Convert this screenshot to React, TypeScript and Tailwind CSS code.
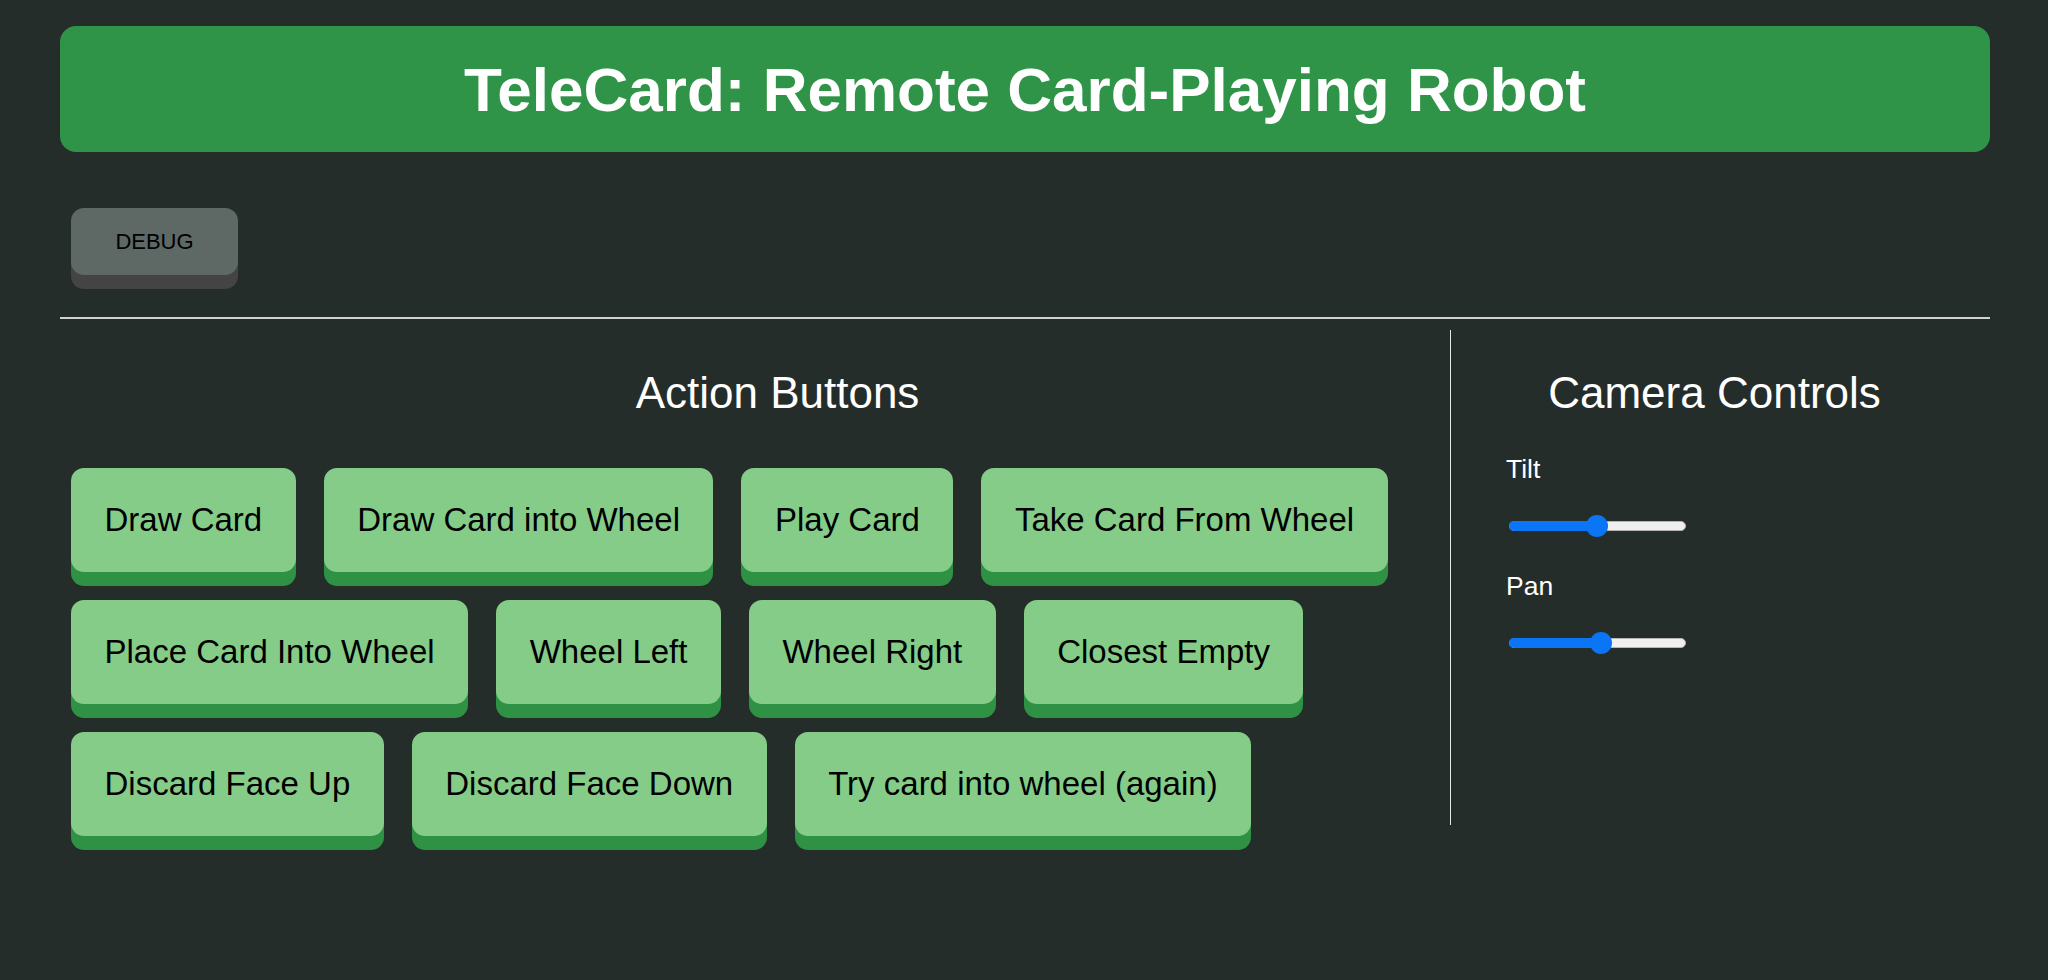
import React from "react";

const actions = [
  "Draw Card",
  "Draw Card into Wheel",
  "Play Card",
  "Take Card From Wheel",
  "Place Card Into Wheel",
  "Wheel Left",
  "Wheel Right",
  "Closest Empty",
  "Discard Face Up",
  "Discard Face Down",
  "Try card into wheel (again)",
];

function Slider({ label, pos }: { label: string; pos: number }) {
  return (
    <div>
      <div className="text-[26.5px] leading-[30px] text-white">{label}</div>
      <div className="relative ml-[3px] mt-[31px] h-[22px] w-[177px]">
        <div className="absolute left-0 right-0 top-[6px] h-[10px] rounded-full border border-[#b5b5b5] bg-[#efefef]" />
        <div
          className="absolute left-0 top-[6px] h-[10px] rounded-full bg-[#0a75f5]"
          style={{ width: pos }}
        />
        <div
          className="absolute top-0 h-[22px] w-[22px] rounded-full bg-[#0a75f5]"
          style={{ left: pos - 11 }}
        />
      </div>
    </div>
  );
}

export default function App() {
  return (
    <div
      className="min-h-screen bg-[#252d2b] pl-[60px] pr-[58px] pt-[26px]"
      style={{ fontFamily: '"Liberation Sans", Arial, sans-serif' }}
    >
      <header className="flex h-[126px] items-center justify-center rounded-[16px] bg-[#2f9447]">
        <h1 className="text-[62px] font-bold leading-[71px] text-white">
          TeleCard: Remote Card-Playing Robot
        </h1>
      </header>

      <div className="pl-[11px] pt-[56px]">
        <button className="h-[67px] w-[167px] rounded-[13px] bg-[#5e6864] text-[22px] text-black shadow-[0_14px_0_#444444]">
          DEBUG
        </button>
      </div>

      <div className="mt-[42px] h-[2px] bg-[#d2d2d2]" />

      <div className="mt-[11px] flex">
        <div className="w-[1390px]">
          <h2 className="mt-[37px] pl-[45px] text-center text-[44px] leading-[51px] text-white">
            Action Buttons
          </h2>
          <div className="mt-[50px] flex flex-wrap gap-[28px] px-[11px]">
            {actions.map((a) => (
              <button
                key={a}
                className="flex h-[104px] items-center rounded-[13px] bg-[#86cc89] px-[33.5px] text-[33px] leading-[38px] text-black shadow-[0_14px_0_#2e9143]"
              >
                {a}
              </button>
            ))}
          </div>
        </div>

        <div className="h-[495px] w-px bg-[#e6e6e6]" />

        <div className="flex-1">
          <h2 className="mt-[37px] pr-[12px] text-center text-[44px] leading-[51px] text-white">
            Camera Controls
          </h2>
          <div className="mt-[36px] flex flex-col gap-[34px] pl-[55px]">
            <Slider label="Tilt" pos={88} />
            <Slider label="Pan" pos={92} />
          </div>
        </div>
      </div>
    </div>
  );
}
